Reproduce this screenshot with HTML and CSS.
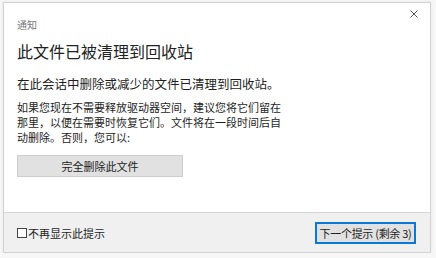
FILE: index.html
```html
<!DOCTYPE html>
<html>
<head>
    <title>通知</title>
    <link rel="stylesheet" href="styles.css">
</head>
<body>
    <div class="dialog">
        <div class="content">
            <div class="header">
                <span class="caption">通知</span>
                <span class="close">
                    <svg width="8" height="8" viewBox="0 0 8 8">
                        <path d="M0.5 0.5 L7.5 7.5 M7.5 0.5 L0.5 7.5" stroke="#555" stroke-width="1" fill="none"/>
                    </svg>
                </span>
            </div>
            <h1 class="title">此文件已被清理到回收站</h1>
            <p class="lead">在此会话中删除或减少的文件已清理到回收站。</p>
            <p class="text">如果您现在不需要释放驱动器空间，建议您将它们留在那里，以便在需要时恢复它们。文件将在一段时间后自动删除。否则，您可以:</p>
            <button class="btn delete">完全删除此文件</button>
        </div>
        <div class="footer">
            <label class="check"><span class="box"></span>不再显示此提示</label>
            <button class="btn next">下一个提示 (剩余 3)</button>
        </div>
    </div>
</body>
</html>
```

FILE: styles.css
```css
body {
    margin: 0;
    background: #f7f7f7;
    font-family: "Noto Sans CJK SC", "Noto Sans", sans-serif;
    color: #1e1e1e;
}

.dialog {
    width: 426px;
    height: 249px;
    margin: 2px 0 0 3px;
    border: 1px solid #d2d2d2;
    background: #fff;
    display: flex;
    flex-direction: column;
    box-shadow: 0 0 3px rgba(0, 0, 0, 0.08);
}

.content {
    flex: 1;
    padding: 7px 12px 0 13px;
}

.header {
    display: flex;
    justify-content: space-between;
    align-items: flex-start;
}

.caption {
    margin-top: 8px;
    font-size: 10px;
    line-height: 14px;
    color: #777;
}

.close {
    margin-top: 0;
    width: 8px;
    height: 8px;
    display: flex;
}

.title {
    margin: 8px 0 0;
    font-size: 16px;
    font-weight: normal;
    line-height: 22px;
    color: #222;
}

.lead {
    margin: 13px 0 0;
    font-size: 12.5px;
    line-height: 18px;
}

.text {
    margin: 7px 0 0;
    width: 266px;
    font-size: 11px;
    line-height: 15px;
}

.btn {
    font-family: "Noto Sans CJK SC", "Noto Sans", sans-serif;
    font-size: 11px;
    color: #1e1e1e;
    background: #e1e1e1;
    border: 1px solid #cdcdcd;
    padding: 0;
    height: 22px;
}

.delete {
    margin-top: 10px;
    width: 166px;
}

.footer {
    height: 39px;
    border-top: 1px solid #d6d6d6;
    background: #f0f0f0;
    display: flex;
    align-items: center;
    justify-content: space-between;
    padding: 0 14px 0 13px;
}

.check {
    display: flex;
    align-items: center;
    font-size: 11px;
    line-height: 14px;
}

.box {
    width: 8px;
    height: 8px;
    border: 1px solid #444;
    background: #fff;
    margin-right: 1px;
}

.next {
    width: 101px;
    border: 2px solid #0a78d7;
    letter-spacing: -0.3px;
}
```
